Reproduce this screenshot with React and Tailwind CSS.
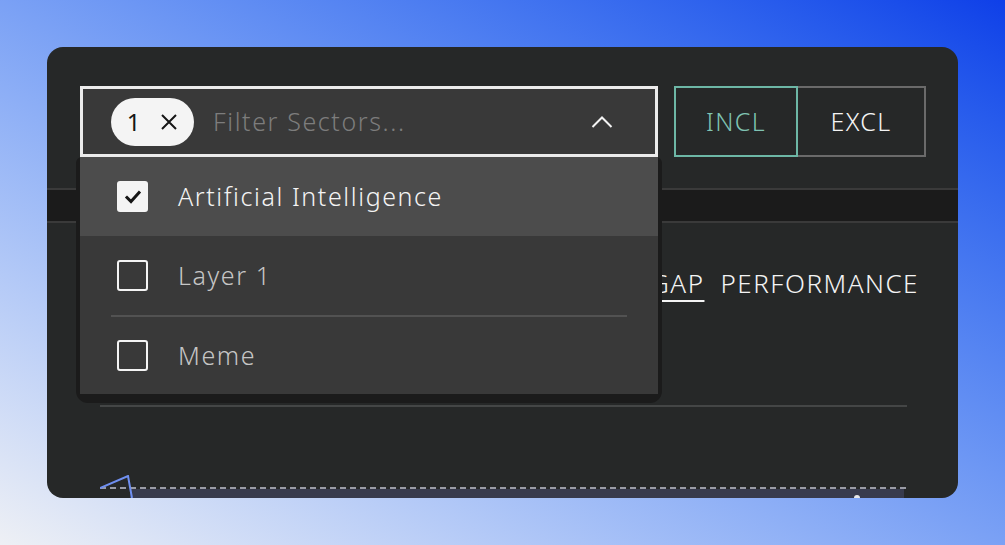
import { useState } from "react";

const SECTORS = [
    { name: "Artificial Intelligence", checked: true },
    { name: "Layer 1", checked: false },
    { name: "Meme", checked: false },
];

const Checkbox = ({ checked }) => {
    if (checked) {
        return (
            <span className="flex h-[31px] w-[31px] items-center justify-center rounded-[3px] bg-[#f4f4f4]">
                <svg width="20" height="20" viewBox="0 0 20 20" fill="none">
                    <path d="M4 10.5 L8 14.5 L16 5.5" stroke="#161616" strokeWidth="3" strokeLinecap="square" />
                </svg>
            </span>
        );
    }
    return <span className="h-[31px] w-[31px] rounded-[3px] border-2 border-[#f4f4f4]" />;
};

const SectorSelect = () => {
    const [open] = useState(true);

    return (
        <div className="relative w-[578px]">
            <div className="flex h-[71px] items-center border-[3px] border-[#ececec] bg-[#393939] pl-[28px] pr-[42px]">
                <span className="flex h-[48px] w-[83px] items-center justify-center gap-[20px] rounded-full bg-[#f4f4f4] text-[24px] font-normal text-[#161616]">
                    <span>1</span>
                    <svg width="18" height="18" viewBox="0 0 18 18" fill="none">
                        <path d="M2 2 L16 16 M16 2 L2 16" stroke="#161616" strokeWidth="2" />
                    </svg>
                </span>
                <span className="ml-[19px] flex-1 text-[25px] tracking-[1.6px] text-[#7d7d7d]">Filter Sectors...</span>
                <svg width="22" height="14" viewBox="0 0 22 14" fill="none">
                    <path d="M1.5 12 L11 2.5 L20.5 12" stroke="#f4f4f4" strokeWidth="2" />
                </svg>
            </div>
            {open && (
                <div className="absolute left-[-4px] top-full z-10 w-[586px] rounded-b-xl rounded-t-md bg-[#1b1b1b] px-[4px] pb-[9px]">
                    <ul className="bg-[#393939]">
                        {SECTORS.map((s, i) => (
                            <li
                                key={s.name}
                                className={`${s.checked ? "bg-[#4c4c4c]" : ""} px-[31px]`}
                            >
                                <div
                                    className={`${i > 1 ? "border-t-2 border-[#525252]" : ""} flex h-[79px] items-center gap-[30px] pl-[6px]`}
                                >
                                    <Checkbox checked={s.checked} />
                                    <span
                                        className={`${s.checked ? "text-[#f4f4f4]" : "text-[#c6c6c6]"} text-[25px] tracking-[1.6px]`}
                                    >
                                        {s.name}
                                    </span>
                                </div>
                            </li>
                        ))}
                    </ul>
                </div>
            )}
        </div>
    );
};

export default function App() {
    return (
        <div
            className="flex h-[545px] w-full items-start bg-linear-to-tr from-[#eef0f5] to-[#0f3fe8] pl-[47px] pt-[47px] font-light"
            style={{ fontFamily: "'Noto Sans', Roboto, sans-serif" }}
        >
            <div className="flex h-[451px] w-[911px] flex-col overflow-hidden rounded-[16px] bg-[#262828]">
                <div className="flex gap-[16px] pl-[33px] pt-[39px]">
                    <SectorSelect />
                    <div className="flex h-[71px]">
                        <button className="w-[124px] border-2 border-[#6db7a6] text-[25px] tracking-[1.4px] text-[#7fc3b3]">
                            INCL
                        </button>
                        <button className="w-[128px] border-2 border-l-0 border-[#6a6a6a] text-[25px] tracking-[1.4px] text-[#f4f4f4]">
                            EXCL
                        </button>
                    </div>
                </div>

                <div className="mt-[31px] h-[35px] border-y-2 border-[#3a3a3a] bg-[#1b1b1b]" />

                <div className="mt-[43px] flex justify-end gap-[16px] pr-[39px] text-[26px] leading-[34px] tracking-[1.5px] text-[#f4f4f4]">
                    <span className="underline underline-offset-[7px] decoration-2">GAP</span>
                    <span>PERFORMANCE</span>
                </div>

                <div className="ml-[53px] mr-[51px] mt-[105px] border-t-2 border-[#444646]" />

                <div className="ml-[53px] mt-auto">
                    <svg width="806" height="23" viewBox="0 0 806 23" fill="none" className="block">
                        <rect x="30" y="14" width="774" height="9" fill="#383b4d" />
                        <line x1="0" y1="13" x2="806" y2="13" stroke="#9a9ca6" strokeWidth="2" strokeDasharray="6 4" />
                        <path d="M0 13 L28 1 L32 23" stroke="#6f8ff0" strokeWidth="2" />
                        <circle cx="757" cy="23" r="3" fill="#e8e8e8" />
                    </svg>
                </div>
            </div>
        </div>
    );
}
